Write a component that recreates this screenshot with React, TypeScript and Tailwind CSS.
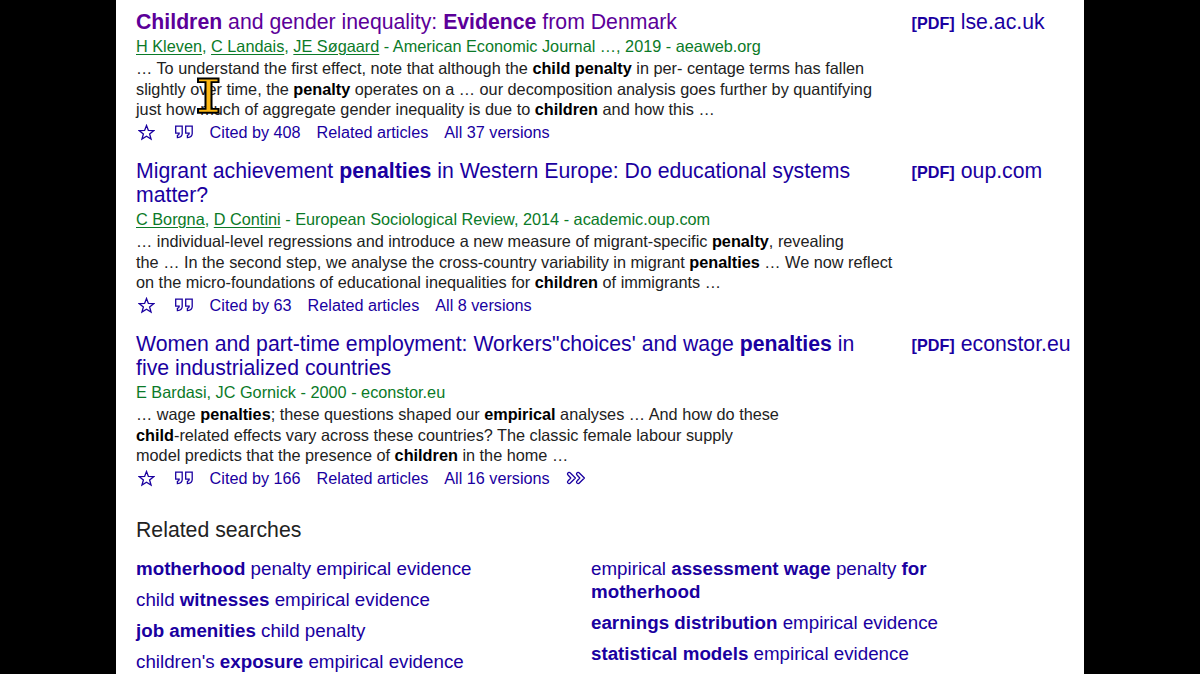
import React from "react";

type Result = {
  title: string[];
  visited?: boolean;
  authors: string;
  snippet: string[];
  links: string[];
  more?: boolean;
  pdf: string;
};

const results: Result[] = [
  {
    title: ["*Children* and gender inequality: *Evidence* from Denmark"],
    visited: true,
    authors:
      "_H Kleven_, _C Landais_, _JE Søgaard_ - American Economic Journal …, 2019 - aeaweb.org",
    snippet: [
      "… To understand the first effect, note that although the *child penalty* in per- centage terms has fallen",
      "slightly over time, the *penalty* operates on a … our decomposition analysis goes further by quantifying",
      "just how much of aggregate gender inequality is due to *children* and how this …",
    ],
    links: ["Cited by 408", "Related articles", "All 37 versions"],
    pdf: "lse.ac.uk",
  },
  {
    title: [
      "Migrant achievement *penalties* in Western Europe: Do educational systems",
      "matter?",
    ],
    authors:
      "_C Borgna_, _D Contini_ - European Sociological Review, 2014 - academic.oup.com",
    snippet: [
      "… individual-level regressions and introduce a new measure of migrant-specific *penalty*, revealing",
      "the … In the second step, we analyse the cross-country variability in migrant *penalties* … We now reflect",
      "on the micro-foundations of educational inequalities for *children* of immigrants …",
    ],
    links: ["Cited by 63", "Related articles", "All 8 versions"],
    pdf: "oup.com",
  },
  {
    title: [
      "Women and part-time employment: Workers\"choices' and wage *penalties* in",
      "five industrialized countries",
    ],
    authors: "E Bardasi, JC Gornick - 2000 - econstor.eu",
    snippet: [
      "… wage *penalties*; these questions shaped our *empirical* analyses … And how do these",
      "*child*-related effects vary across these countries? The classic female labour supply",
      "model predicts that the presence of *children* in the home …",
    ],
    links: ["Cited by 166", "Related articles", "All 16 versions"],
    more: true,
    pdf: "econstor.eu",
  },
];

const relatedLeft = [
  ["*motherhood* penalty empirical evidence"],
  ["child *witnesses* empirical evidence"],
  ["*job amenities* child penalty"],
  ["children's *exposure* empirical evidence"],
];

const relatedRight = [
  ["empirical *assessment wage* penalty *for*", "*motherhood*"],
  ["*earnings distribution* empirical evidence"],
  ["*statistical models* empirical evidence"],
];

// *text* is bold, _text_ is an underlined author link
function Rich({ text, boldClass = "" }: { text: string; boldClass?: string }) {
  return (
    <>
      {text.split(/(\*[^*]+\*|_[^_]+_)/).map((part, i) => {
        if (part.startsWith("*")) {
          return (
            <b key={i} className={`font-bold ${boldClass}`}>
              {part.slice(1, -1)}
            </b>
          );
        }
        if (part.startsWith("_")) {
          return (
            <a key={i} className="underline decoration-1 underline-offset-2">
              {part.slice(1, -1)}
            </a>
          );
        }
        return part;
      })}
    </>
  );
}

function StarIcon() {
  return (
    <svg width="17" height="17" viewBox="0 0 18 18" fill="none" stroke="currentColor" strokeWidth="1.4">
      <path d="M9 1.6 11 6.8 16.6 7.1 12.3 10.6 13.8 16 9 13 4.2 16 5.7 10.6 1.4 7.1 7 6.8Z" />
    </svg>
  );
}

function QuoteIcon() {
  return (
    <svg width="20" height="16" viewBox="0 0 20 16" fill="none" stroke="currentColor" strokeWidth="1.3">
      <path d="M1.7 2.2H8.2V9.8Q8 13.4 3.4 13.6V11.4Q5.2 11 5.2 9.2H1.7Z" />
      <path d="M11.7 2.2H18.2V9.8Q18 13.4 13.4 13.6V11.4Q15.2 11 15.2 9.2H11.7Z" />
    </svg>
  );
}

function MoreIcon() {
  return (
    <svg width="20" height="14" viewBox="0 0 20 14" fill="none" stroke="currentColor" strokeWidth="1.3" strokeLinejoin="round">
      <path d="M1.6 2.4Q3 .6 4.6 2.2L9.4 7 4.6 11.8Q3 13.4 1.6 11.6 1.2 10.8 2 10L4.8 7 2 4Q1.2 3.2 1.6 2.4Z" />
      <path d="M10.6 2.4Q12 .6 13.6 2.2L18.4 7 13.6 11.8Q12 13.4 10.6 11.6 10.2 10.8 11 10L13.8 7 11 4Q10.2 3.2 10.6 2.4Z" />
    </svg>
  );
}

function ResultItem({ result }: { result: Result }) {
  return (
    <div className="flex h-[149px] has-[h3>span+span]:h-[173px]">
      <div className="w-[776px] shrink-0">
        <h3
          className={`text-[21.25px] leading-6 ${
            result.visited ? "text-[#5c0099]" : "text-[#1a00a0]"
          }`}
        >
          {result.title.map((line) => (
            <span key={line} className="block">
              <Rich text={line} />
            </span>
          ))}
        </h3>
        <div className="mt-0.5 text-[16.27px] leading-5 text-[#0b7a28]">
          <Rich text={result.authors} />
        </div>
        <div className="mt-[2.4px] text-[16.27px] leading-[20.2px] text-[#222222]">
          {result.snippet.map((line) => (
            <div key={line}>
              <Rich text={line} boldClass="text-black" />
            </div>
          ))}
        </div>
        <div className="mt-[3px] flex items-center text-[16.22px] leading-5 text-[#1a00a0]">
          <div className="ml-0.5 w-9">
            <StarIcon />
          </div>
          <div className="w-[35.6px]">
            <QuoteIcon />
          </div>
          <div className="flex items-center gap-4">
            {result.links.map((link) => (
              <a key={link}>{link}</a>
            ))}
            {result.more && <MoreIcon />}
          </div>
        </div>
      </div>
      <a className="-ml-[0.4px] flex items-baseline gap-1.5 self-start text-[21.25px] leading-6 text-[#1a00a0]">
        <b className="text-[16.2px]">[PDF]</b>
        <span>{result.pdf}</span>
      </a>
    </div>
  );
}

function RelatedColumn({ items }: { items: string[][] }) {
  return (
    <div className="flex w-[455px] flex-col gap-2">
      {items.map((lines) => (
        <a key={lines[0]} className="block">
          {lines.map((line) => (
            <span key={line} className="block">
              <Rich text={line} />
            </span>
          ))}
        </a>
      ))}
    </div>
  );
}

function Cursor() {
  return (
    <svg className="absolute left-[81px] top-[77px]" width="23" height="37" viewBox="0 0 23 37">
      <path d="M0 .5H22.5V6H15.5V31H22.5V36.7H0V31H7.5V6H0Z" fill="#000" />
      <path d="M2 2.5H20.5V4.3H13.5V32.7H20.5V34.7H2V32.7H9.5V4.3H2Z" fill="#fdb813" />
    </svg>
  );
}

export default function App() {
  return (
    <div className="flex h-[674px] justify-center overflow-hidden bg-black font-['Liberation_Sans',Arial,sans-serif]">
      <main className="relative w-[968px] whitespace-nowrap bg-white pl-5 pt-2.5">
        {results.map((result) => (
          <ResultItem key={result.pdf} result={result} />
        ))}
        <h2 className="mt-[13px] text-[21.25px] leading-6 text-[#222222]">Related searches</h2>
        <div className="mt-[15px] flex text-[18.75px] leading-[23px] text-[#1a00a0]">
          <RelatedColumn items={relatedLeft} />
          <RelatedColumn items={relatedRight} />
        </div>
        <Cursor />
      </main>
    </div>
  );
}
